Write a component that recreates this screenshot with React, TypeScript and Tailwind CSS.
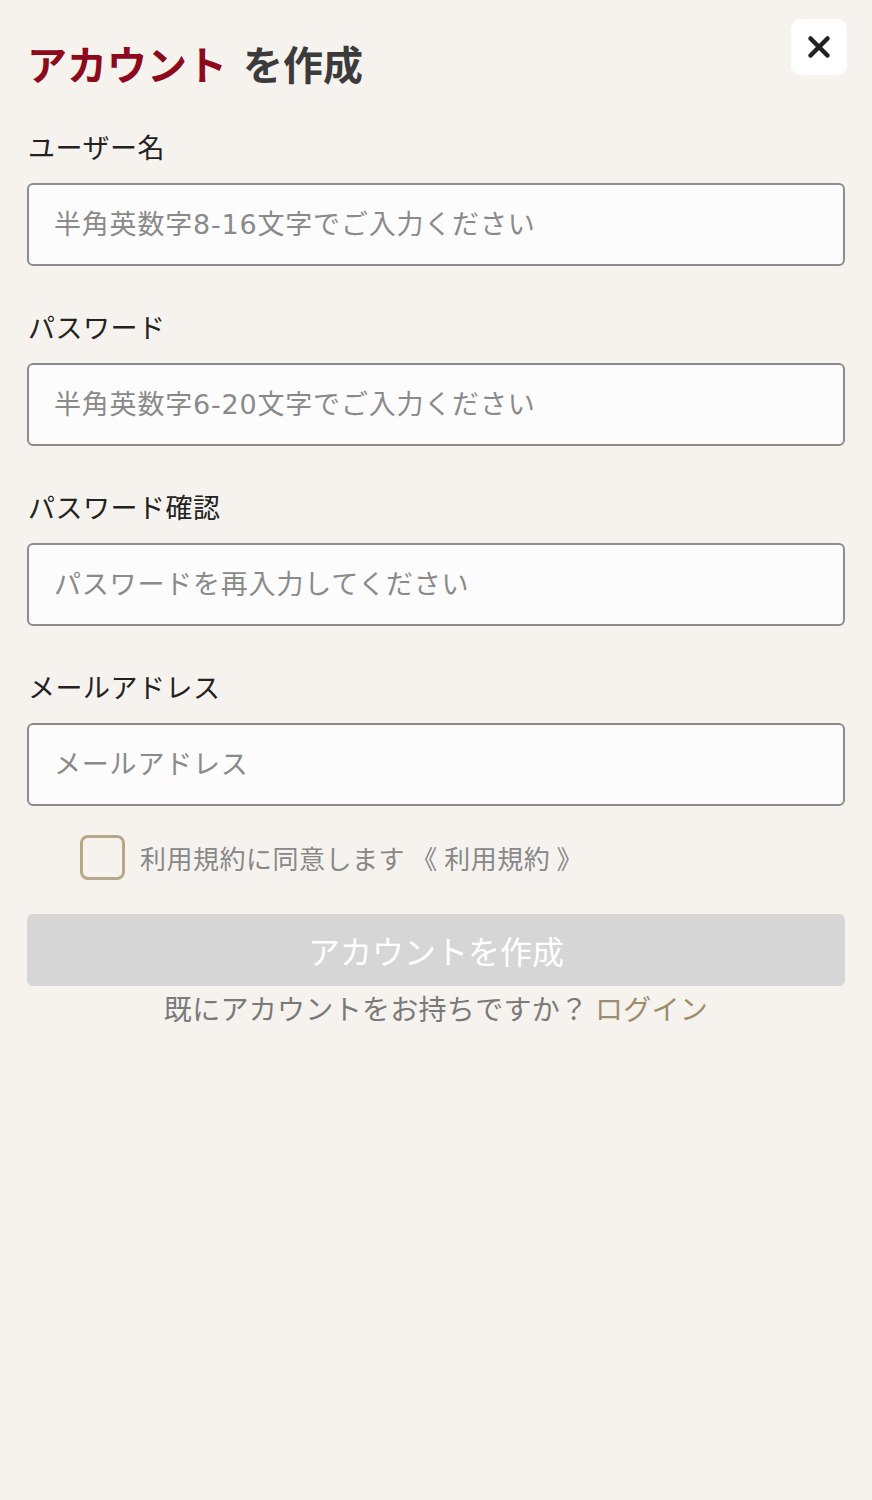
import { X } from "lucide-react";

const font = { fontFamily: '"Noto Sans CJK JP", "Noto Sans", sans-serif' };
const inputFont = { fontFamily: '"DejaVu Sans", "Noto Sans CJK JP", sans-serif' };

const fields = [
  { label: "ユーザー名", placeholder: "半角英数字8-16文字でご入力ください", type: "text" },
  { label: "パスワード", placeholder: "半角英数字6-20文字でご入力ください", type: "password" },
  { label: "パスワード確認", placeholder: "パスワードを再入力してください", type: "password" },
  { label: "メールアドレス", placeholder: "メールアドレス", type: "email" },
];

export default function App() {
  return (
    <div className="min-h-[1500px] w-full bg-[#f6f3ef] px-[27px]" style={font}>
      <div className="flex items-start justify-between pt-[19px]">
        <h1 className="mt-[20px] flex items-center gap-[16px] text-[40px] font-bold leading-[48px]">
          <span className="text-[#8c0a1c]">アカウント</span>
          <span className="text-[#3b3b3b]">を作成</span>
        </h1>
        <button className="mr-[-2px] flex h-[56px] w-[56px] items-center justify-center rounded-[10px] bg-white">
          <X className="h-[34px] w-[34px] text-[#222]" strokeWidth={3.2} />
        </button>
      </div>

      <div className="mt-[41px] flex flex-col gap-[42px]">
        {fields.map((f) => (
          <div key={f.label} className="flex flex-col">
            <label className="pl-[1px] text-[27px] leading-[38px] tracking-[0.5px] text-[#222]">{f.label}</label>
            <input
              type={f.type}
              placeholder={f.placeholder}
              style={inputFont}
              className="mt-[17px] h-[83px] w-full rounded-[6px] border-2 border-[#8c8c8c] bg-[#fcfcfc] px-[25px] text-[27px] tracking-[0.8px] text-[#333] outline-none placeholder:text-[#8a8a8a]"
            />
          </div>
        ))}
      </div>

      <label className="mt-[29px] flex items-center gap-[15px] pl-[53px]">
        <span className="h-[45px] w-[45px] rounded-[8px] border-[3px] border-[#b5a98a] bg-transparent" />
        <span className="text-[26px] leading-[36px] tracking-[0.5px] text-[#888]">
          利用規約に同意します&nbsp;《&nbsp;利用規約&nbsp;》
        </span>
      </label>

      <button className="mt-[34px] flex h-[72px] w-full items-center justify-center rounded-[6px] bg-[#d6d6d6] text-[32px] text-white">
        アカウントを作成
      </button>

      <p className="mt-[2px] text-center text-[28px] leading-[40px] tracking-[0.3px] text-[#7a7a7a]">
        既にアカウントをお持ちですか？ <span className="text-[#9e8c6c]">ログイン</span>
      </p>
    </div>
  );
}
